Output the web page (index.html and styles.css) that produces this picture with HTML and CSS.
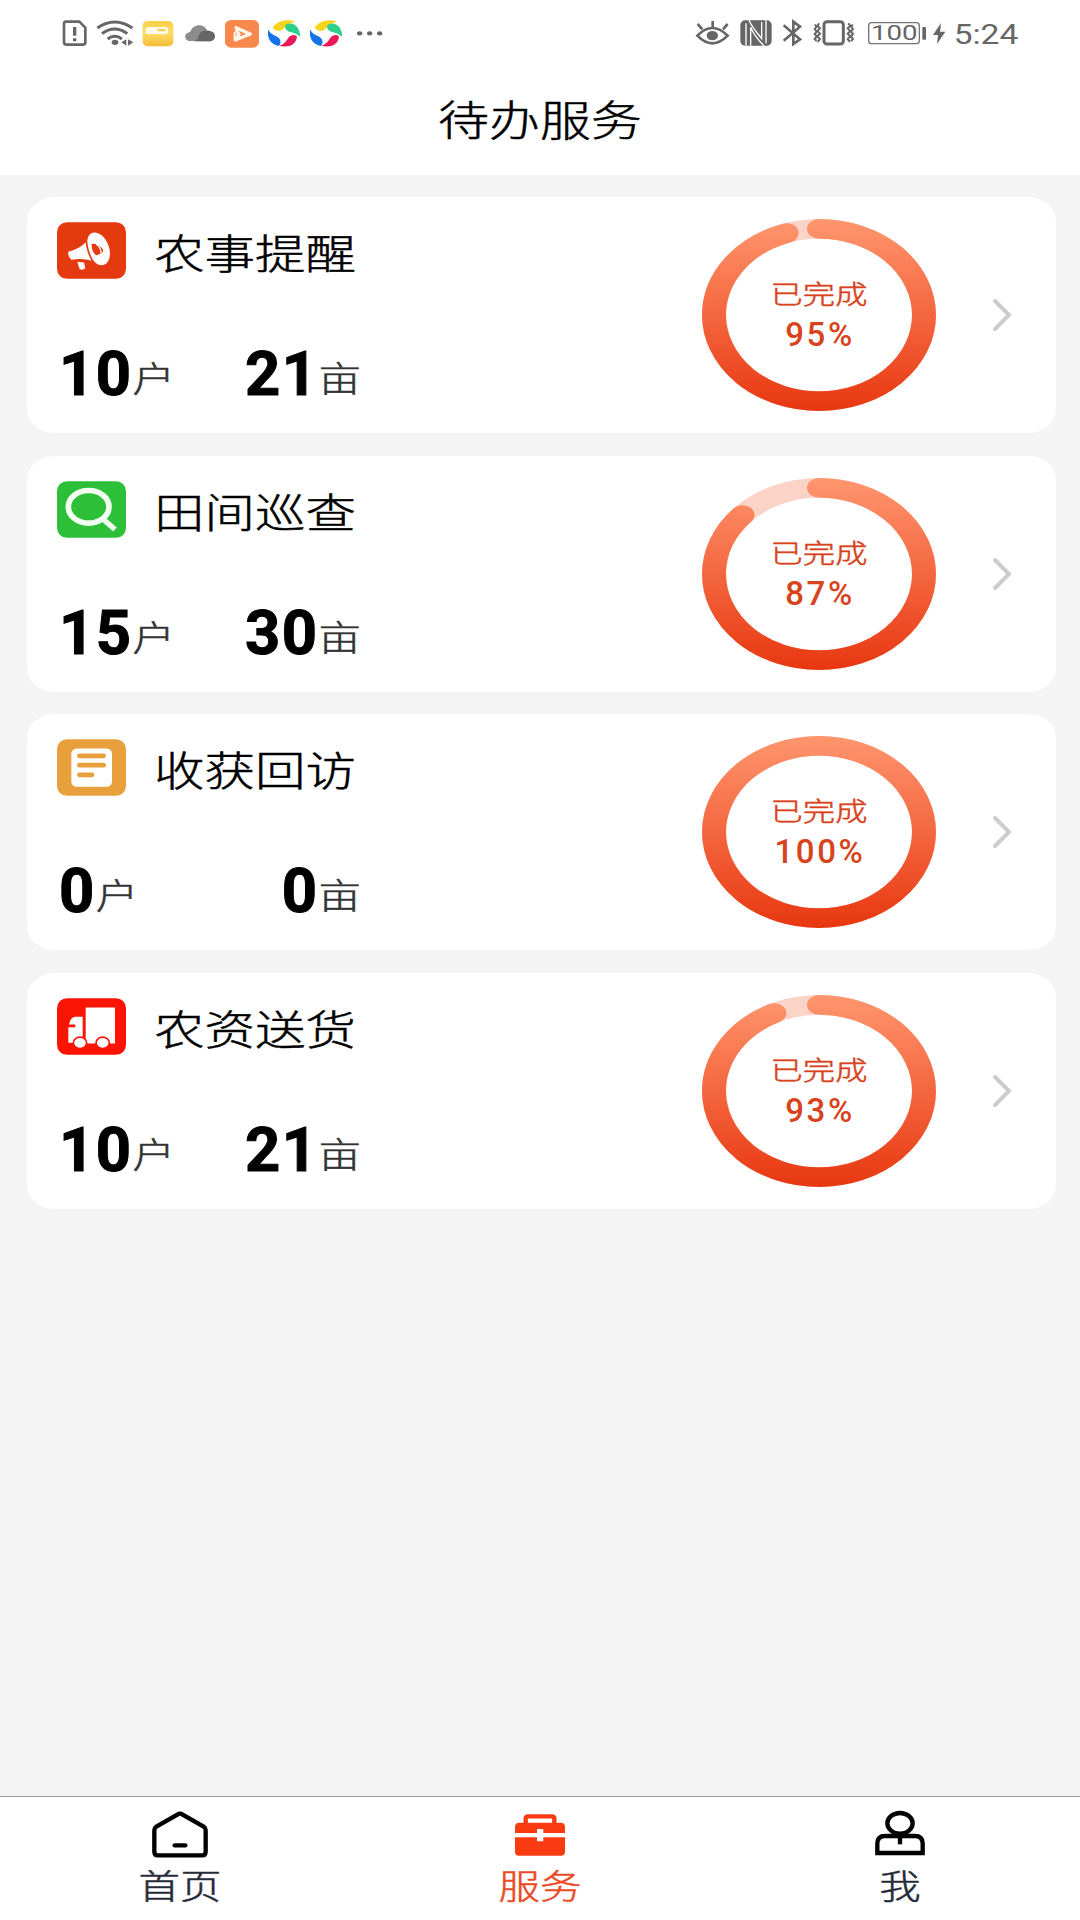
FILE: index.html
```html
<!DOCTYPE html>
<html lang="zh-CN">

<head>
    <meta charset="UTF-8">
    <meta name="viewport" content="width=device-width, initial-scale=1.0">
    <title>待办服务</title>
    <link rel="stylesheet" href="styles.css">
</head>

<body>
    <!-- 公用渐变 -->
    <svg class="defs" width="0" height="0">
        <defs>
            <linearGradient id="ring" gradientUnits="userSpaceOnUse" x1="0" y1="0" x2="0" y2="234">
                <stop offset="0" stop-color="#ff966e" />
                <stop offset="1" stop-color="#e83710" />
            </linearGradient>
            <linearGradient id="folder" x1="0" y1="0" x2="0" y2="1">
                <stop offset="0" stop-color="#fbcf48" />
                <stop offset="0.5" stop-color="#fbdc68" />
                <stop offset="1" stop-color="#f6bc38" />
            </linearGradient>
            <g id="swirl">
                <path d="M668 52C684 30 714 26 735 35C722 38 708 44 699 58C690 66 672 64 668 52Z" fill="#f7d51d" />
                <path d="M709 43C730 33 752 52 750 80C741 72 731 67 717 65C705 60 702 49 709 43Z" fill="#2fd08c" />
                <path d="M655 58C650 82 660 103 686 108C695 100 693 88 683 81C670 76 659 70 655 58Z" fill="#1273ea" />
                <path d="M741 80C738 105 714 114 688 107C703 102 709 93 715 83C723 74 735 72 741 80Z" fill="#ea1857" />
            </g>
        </defs>
    </svg>

    <div class="wrap">
        <div class="status">
            <div class="status-left">
                <svg width="42" height="50" viewBox="0 0 126 150" fill="none" stroke="#666" stroke-width="8">
                    <path d="M47 35H88L106 53V97Q106 104 98 104H50Q42 104 42 97V42Q42 35 47 35Z" stroke-linejoin="round" />
                    <path d="M74 51V77M74 85V94" stroke-width="10" />
                </svg>
                <svg width="46" height="50" viewBox="126 0 138 150" fill="none" stroke="#666" stroke-width="9">
                    <path d="M142 54Q194 18 247 54M156 71Q194 43 232 71M173 87Q194 71 216 87" />
                    <ellipse cx="195" cy="97" rx="10" ry="8" fill="#666" stroke="none" />
                    <path d="M229 88V107L214 97ZM234 88V107L250 97Z" fill="#666" stroke="none" />
                </svg>
                <svg width="41" height="50" viewBox="264 0 123 150">
                    <rect x="278" y="33" width="92" height="76" rx="17" ry="14" fill="url(#folder)" />
                    <path d="M287 72V57Q287 51 294 51H346Q354 51 354 59V66Q354 72 346 72Z" fill="#fffbe9" />
                    <path d="M322 57H346V64H330Q322 64 322 57Z" fill="#f9cb4b" />
                </svg>
                <svg width="41" height="50" viewBox="387 0 123 150">
                    <path d="M420 93C402 92 401 68 421 67C427 43 462 38 471 62C500 61 503 92 477 94Z" fill="#777" />
                    <path d="M421 67C427 43 462 38 471 62C450 62 443 74 445 84C437 95 430 93 420 93C402 92 401 68 421 67Z" fill="#8c8c8c" />
                    <path d="M471 62C500 61 503 92 477 94H430C442 92 446 84 447 77C450 66 459 61 471 62Z" fill="#666" />
                </svg>
                <svg width="43" height="50" viewBox="510 0 129 150">
                    <rect x="525" y="30" width="102" height="83" rx="19" ry="16" fill="#f8884b" />
                    <path d="M558 53L601 72L556 90M560 62L567 73L560 84" fill="none" stroke="#fff5ec" stroke-width="10" stroke-linejoin="round" stroke-linecap="round" />
                    <path d="M554 66V90" stroke="#fff5ec" stroke-width="6" />
                </svg>
                <svg width="42" height="50" viewBox="639 0 126 150"><use href="#swirl" /></svg>
                <svg width="42" height="50" viewBox="639 0 126 150"><use href="#swirl" /></svg>
                <svg width="50" height="50" viewBox="891 0 150 150" fill="#666">
                    <ellipse cx="929" cy="70" rx="8" ry="6.5" />
                    <ellipse cx="959" cy="70" rx="8" ry="6.5" />
                    <ellipse cx="989" cy="70" rx="8" ry="6.5" />
                </svg>
            </div>
            <div class="status-right">
                <svg width="55" height="50" viewBox="0 0 165 150" fill="none" stroke="#666" stroke-width="8">
                    <path d="M52 77Q97 31 143 77Q97 123 52 77Z" />
                    <path d="M98 52V33M67 58L53 42M129 58L143 42" />
                    <ellipse cx="97" cy="77" rx="17" ry="14" fill="#666" stroke="none" />
                </svg>
                <svg width="43" height="50" viewBox="165 0 129 150">
                    <rect x="181" y="31" width="94" height="76" rx="14" fill="#666" />
                    <path d="M198 107V40M207 31C216 52 229 66 245 86V36M212 107V52C222 76 236 92 252 107M258 100V31" fill="none" stroke="#fff" stroke-width="4" />
                </svg>
                <svg width="32" height="50" viewBox="294 0 96 150" fill="none" stroke="#666" stroke-width="8">
                    <path d="M311 46L360 88L340 102V35L360 50L311 92" />
                </svg>
                <svg width="50" height="50" viewBox="390 0 150 150" fill="none" stroke="#666" stroke-width="9">
                    <rect x="432" y="35" width="58" height="67" rx="9" />
                    <path d="M404 44L410 50L404 57L410 65L404 72L410 79L404 87L410 93M418 40L412 47L420 55L412 63L420 71L412 79L420 87L413 96" stroke-width="6" />
                    <path d="M519 44L513 50L519 57L513 65L519 72L513 79L519 87L513 93M505 40L511 47L503 55L511 63L503 71L511 79L503 87L510 96" stroke-width="6" />
                </svg>
                <svg width="70" height="50" viewBox="540 0 210 150">
                    <rect x="566" y="38" width="152" height="63" rx="9" fill="none" stroke="#777" stroke-width="4" />
                    <rect x="727" y="51" width="11" height="38" rx="3" fill="#666" />
                    <text class="status-text" x="573" y="91" font-size="62" textLength="140" lengthAdjust="spacingAndGlyphs">100</text>
                </svg>
                <svg width="20" height="50" viewBox="750 0 60 150">
                    <path d="M783 39L759 75H774L771 102L796 65H780Z" fill="#666" />
                </svg>
                <svg width="80" height="50" viewBox="810 0 240 150">
                    <text class="status-text" x="821" y="101" font-size="83" textLength="194" lengthAdjust="spacingAndGlyphs">5:24</text>
                </svg>
            </div>
        </div>

        <div class="header">
            <h1 class="title flat">待办服务</h1>
        </div>

        <ul class="card-list">
            <li class="card">
                <div class="info">
                    <div class="info-head">
                        <svg class="icon" viewBox="0 0 207 170">
                            <rect width="207" height="170" rx="30" fill="#e5390f" />
                            <path d="M34 89Q68 80 89 58Q94 92 105 116Q76 107 43 113Q31 101 34 89Z" fill="#fff" />
                            <path d="M61 119L81 121L85 138Q77 145 68 141Z" fill="#fff" />
                            <ellipse cx="124" cy="80" rx="32" ry="51" transform="rotate(-20 124 80)" fill="#fff" />
                            <path d="M104 66C112 62 128 68 138 82C140 90 133 95 117 99C107 91 103 78 104 66Z" fill="#e5390f" />
                            <path d="M117 66Q133 74 132 94" fill="none" stroke="#fff" stroke-width="4" />
                            <path d="M88 46Q88 89 111 123" fill="none" stroke="#e5390f" stroke-width="5" />
                        </svg>
                        <h2 class="name flat">农事提醒</h2>
                    </div>
                    <div class="stats">
                        <p class="stat"><span class="num">10</span><span class="unit flat">户</span></p>
                        <p class="stat"><span class="num">21</span><span class="unit flat">亩</span></p>
                    </div>
                </div>
                <div class="progress">
                    <svg class="ring" viewBox="0 0 234 234" preserveAspectRatio="none">
                        <circle class="track" cx="117" cy="117" r="105" />
                        <path class="bar" pathLength="100" stroke-dasharray="95 100" d="M117 12A105 105 0 0 1 117 222A105 105 0 0 1 117 12" />
                    </svg>
                    <div class="progress-text">
                        <span class="label flat">已完成</span>
                        <span class="percent">95%</span>
                    </div>
                </div>
                <svg class="arrow" viewBox="0 0 20 34"><path d="M3 3L17 17L3 31" /></svg>
            </li>
            <li class="card">
                <div class="info">
                    <div class="info-head">
                        <svg class="icon" viewBox="0 0 207 170">
                            <rect width="207" height="170" rx="30" fill="#2dbf38" />
                            <ellipse cx="95" cy="77" rx="61" ry="49" fill="none" stroke="#f0fff0" stroke-width="17" />
                            <path d="M137 113L174 145" stroke="#f0fff0" stroke-width="16" />
                        </svg>
                        <h2 class="name flat">田间巡查</h2>
                    </div>
                    <div class="stats">
                        <p class="stat"><span class="num">15</span><span class="unit flat">户</span></p>
                        <p class="stat"><span class="num">30</span><span class="unit flat">亩</span></p>
                    </div>
                </div>
                <div class="progress">
                    <svg class="ring" viewBox="0 0 234 234" preserveAspectRatio="none">
                        <circle class="track" cx="117" cy="117" r="105" />
                        <path class="bar" pathLength="100" stroke-dasharray="87 100" d="M117 12A105 105 0 0 1 117 222A105 105 0 0 1 117 12" />
                    </svg>
                    <div class="progress-text">
                        <span class="label flat">已完成</span>
                        <span class="percent">87%</span>
                    </div>
                </div>
                <svg class="arrow" viewBox="0 0 20 34"><path d="M3 3L17 17L3 31" /></svg>
            </li>
            <li class="card">
                <div class="info">
                    <div class="info-head">
                        <svg class="icon" viewBox="0 0 207 170">
                            <rect width="207" height="170" rx="30" fill="#e7a03c" />
                            <rect x="43" y="28" width="122" height="115" rx="16" fill="#fff" />
                            <path d="M67 50H140M67 78H140M67 107H105" stroke="#e7a03c" stroke-width="14" stroke-linecap="round" />
                        </svg>
                        <h2 class="name flat">收获回访</h2>
                    </div>
                    <div class="stats">
                        <p class="stat"><span class="num">0</span><span class="unit flat">户</span></p>
                        <p class="stat"><span class="num">0</span><span class="unit flat">亩</span></p>
                    </div>
                </div>
                <div class="progress">
                    <svg class="ring" viewBox="0 0 234 234" preserveAspectRatio="none">
                        <circle class="track" cx="117" cy="117" r="105" />
                        <path class="bar" d="M117 12A105 105 0 0 1 117 222A105 105 0 0 1 117 12" />
                    </svg>
                    <div class="progress-text">
                        <span class="label flat">已完成</span>
                        <span class="percent">100%</span>
                    </div>
                </div>
                <svg class="arrow" viewBox="0 0 20 34"><path d="M3 3L17 17L3 31" /></svg>
            </li>
            <li class="card">
                <div class="info">
                    <div class="info-head">
                        <svg class="icon" viewBox="0 0 207 170">
                            <rect width="207" height="170" rx="30" fill="#fb1404" />
                            <rect x="86" y="28" width="88" height="108" fill="#fff" />
                            <path d="M34 134V87H55V79H36Q41 56 55 56H77V134Z" fill="#fff" />
                            <ellipse cx="69" cy="134" rx="20" ry="17" fill="#fff" stroke="#fb1404" stroke-width="5" />
                            <ellipse cx="137" cy="134" rx="20" ry="17" fill="#fff" stroke="#fb1404" stroke-width="5" />
                        </svg>
                        <h2 class="name flat">农资送货</h2>
                    </div>
                    <div class="stats">
                        <p class="stat"><span class="num">10</span><span class="unit flat">户</span></p>
                        <p class="stat"><span class="num">21</span><span class="unit flat">亩</span></p>
                    </div>
                </div>
                <div class="progress">
                    <svg class="ring" viewBox="0 0 234 234" preserveAspectRatio="none">
                        <circle class="track" cx="117" cy="117" r="105" />
                        <path class="bar" pathLength="100" stroke-dasharray="93 100" d="M117 12A105 105 0 0 1 117 222A105 105 0 0 1 117 12" />
                    </svg>
                    <div class="progress-text">
                        <span class="label flat">已完成</span>
                        <span class="percent">93%</span>
                    </div>
                </div>
                <svg class="arrow" viewBox="0 0 20 34"><path d="M3 3L17 17L3 31" /></svg>
            </li>
        </ul>

        <div class="tabbar">
            <div class="tab">
                <svg class="tab-icon" viewBox="0 0 180 150" fill="none" stroke="#000">
                    <path d="M90 14Q94 14 98 17L161 53Q167 57 167 64V128Q167 139 156 139H24Q13 139 13 128V64Q13 57 19 53L82 17Q86 14 90 14Z" stroke-width="13" />
                    <path d="M74 109H106" stroke-width="13" stroke-linecap="round" />
                </svg>
                <span class="tab-text flat">首页</span>
            </div>
            <div class="tab active">
                <svg class="tab-icon" viewBox="0 0 180 150" fill="#fa3b12">
                    <path d="M47 44V29Q47 22 54 22H126Q133 22 133 29V44" fill="none" stroke="#fa3b12" stroke-width="13" />
                    <path d="M15 72V54Q15 41 28 41H152Q165 41 165 54V72H100V60H81V72Z" />
                    <path d="M15 85H81V97H100V85H165V128Q165 140 153 140H27Q15 140 15 128Z" />
                </svg>
                <span class="tab-text flat">服务</span>
            </div>
            <div class="tab">
                <svg class="tab-icon" viewBox="0 0 180 150" fill="none" stroke="#000" stroke-width="13">
                    <ellipse cx="90" cy="43" rx="38" ry="31" />
                    <path d="M22 132V103Q22 81 46 81H134Q158 81 158 103V132Z" />
                    <path d="M90 76V106" />
                </svg>
                <span class="tab-text flat">我</span>
            </div>
        </div>
    </div>
</body>

</html>
```
FILE: styles.css
```css
* {
    padding: 0px;
    margin: 0px;
    box-sizing: border-box;
}
html,body{
    width: 100%;
    height: 100%;
}
body{
    font-family: Roboto, "Noto Sans CJK SC", sans-serif;
    background-color: #f4f4f4;
    overflow: hidden;
}
svg{
    display: block;
    flex-shrink: 0;
}
.defs{
    position: absolute;
}
/* 扁平的汉字 */
.flat{
    display: block;
    font-family: "Noto Sans CJK SC", sans-serif;
    font-weight: 300;
    transform: scaleY(0.82);
    -webkit-text-stroke: 0.6px currentColor;
}

.wrap{
    display: flex;
    flex-direction: column;
    width: 1080px;
    height: 1920px;
}

.status{
    display: flex;
    justify-content: space-between;
    height: 60px;
    padding: 10px 50px 0;
    background-color: #fff;
}
.status-left,
.status-right{
    display: flex;
}
.status-text{
    font-family: Roboto, sans-serif;
    fill: #666;
}

.header{
    display: flex;
    justify-content: center;
    height: 115px;
    padding-top: 28px;
    background-color: #fff;
}
.title{
    font-size: 51px;
    line-height: 60px;
    height: 60px;
}

.card-list{
    flex: 1;
    display: flex;
    flex-direction: column;
    gap: 22.5px;
    list-style: none;
    padding: 22px 24px 0 27px;
}
.card{
    display: flex;
    align-items: center;
    height: 236px;
    padding-left: 30px;
    border-radius: 28px / 24px;
    background-color: #fff;
}
.info{
    width: 304px;
    height: 236px;
    padding-top: 25px;
}
.info-head{
    display: flex;
    gap: 28px;
    height: 60px;
}
.icon{
    width: 69px;
    height: 57px;
}
.name{
    font-size: 50.5px;
    line-height: 60px;
    margin-top: -1px;
    white-space: nowrap;
}
.stats{
    display: flex;
    justify-content: space-between;
    margin-top: 57px;
}
.stat{
    display: flex;
    align-items: baseline;
}
.num{
    font-size: 61.5px;
    font-weight: 700;
    line-height: 70px;
    letter-spacing: 1.5px;
    padding-left: 2px;
    color: #000;
    -webkit-text-stroke: 1px #000;
}
.unit{
    font-size: 42.5px;
    line-height: 50px;
    color: #333;
}

.progress{
    display: grid;
    place-items: center;
    width: 234px;
    height: 192px;
    margin-left: 341px;
}
.ring{
    grid-area: 1 / 1;
    width: 234px;
    height: 192px;
}
.track,
.bar{
    fill: none;
    stroke-width: 24;
}
.track{
    stroke: #fbd3c7;
}
.bar{
    stroke: url(#ring);
    stroke-linecap: round;
}
.progress-text{
    grid-area: 1 / 1;
    display: flex;
    flex-direction: column;
    align-items: center;
    color: #d8431c;
}
.label{
    font-size: 32.3px;
    line-height: 42px;
    margin-top: -2px;
}
.percent{
    font-size: 33px;
    font-weight: 500;
    line-height: 42px;
    letter-spacing: 2.6px;
    padding-left: 2px;
}
.arrow{
    width: 20px;
    height: 34px;
    margin-left: 56px;
    fill: none;
    stroke: #ccc;
    stroke-width: 4;
    stroke-linecap: round;
}

.tabbar{
    display: flex;
    height: 124px;
    border-top: 1px solid #999;
    background-color: #fff;
}
.tab{
    flex: 1;
    display: flex;
    flex-direction: column;
    align-items: center;
    padding-top: 12px;
    color: #262b3a;
}
.tab.active{
    color: #ea4a25;
}
.tab-icon{
    width: 60px;
    height: 50px;
}
.tab-text{
    font-size: 41.5px;
    line-height: 50px;
}
```
